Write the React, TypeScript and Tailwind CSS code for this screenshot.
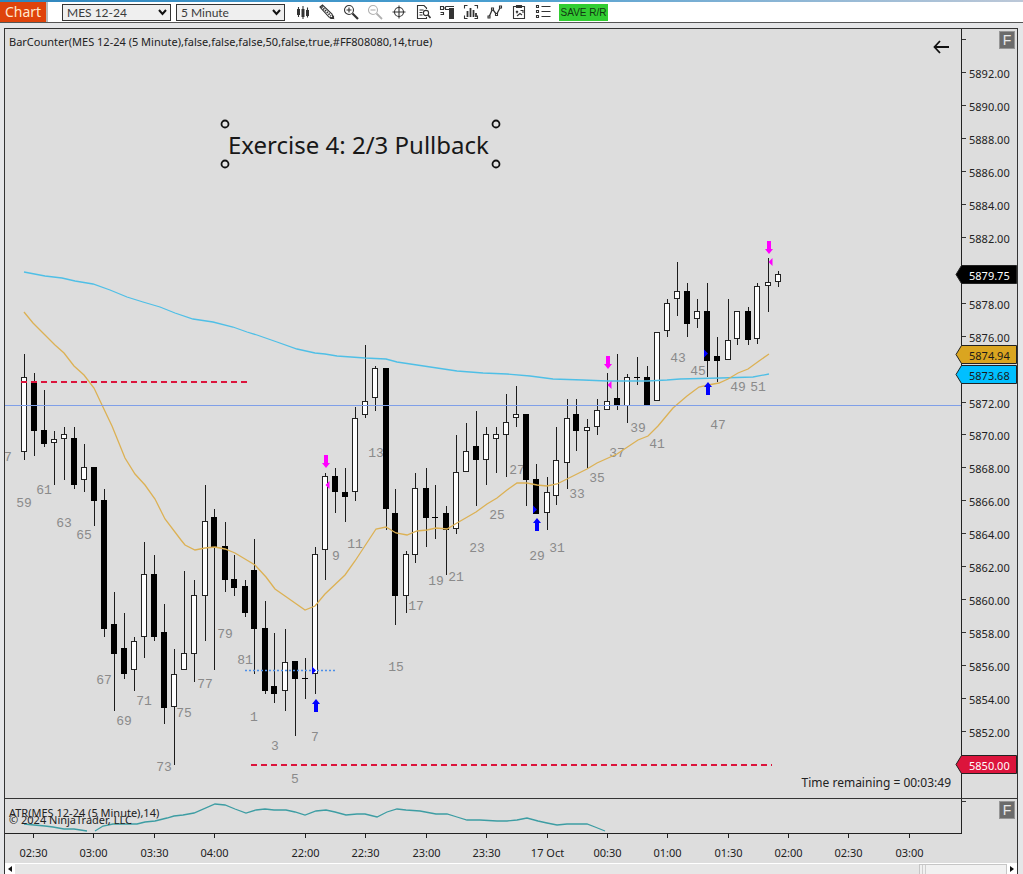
import React from "react";

type Candle = [x: number, high: number, top: number, bottom: number, low: number, up: 0 | 1];

const CANDLES: Candle[] = [
  [24, 354, 377, 452, 460, 1], [34, 373, 382, 431, 456, 0], [44, 390, 430, 444, 447, 0],
  [54, 431, 439, 443, 485, 1], [64, 427, 434, 439, 480, 1], [74, 427, 438, 485, 489, 0],
  [84, 444, 467, 480, 492, 1], [94, 467, 467, 501, 526, 0], [104, 489, 500, 629, 637, 0],
  [114, 592, 624, 654, 711, 0], [124, 613, 648, 674, 679, 0], [134, 637, 641, 670, 691, 1],
  [144, 542, 574, 637, 658, 1], [154, 555, 574, 637, 641, 0], [164, 604, 632, 708, 724, 0],
  [174, 649, 674, 707, 765, 1], [184, 571, 653, 670, 670, 1], [194, 580, 595, 654, 682, 1],
  [205, 485, 521, 596, 641, 1], [214, 509, 517, 547, 670, 0], [225, 522, 546, 580, 592, 0],
  [234, 555, 579, 588, 596, 0], [245, 580, 586, 613, 617, 0], [254, 539, 570, 629, 674, 0],
  [265, 601, 628, 691, 694, 0], [274, 633, 686, 694, 703, 0], [285, 629, 662, 691, 711, 1],
  [295, 661, 661, 679, 736, 0], [305, 658, 678, 679, 699, 0], [315, 547, 554, 674, 694, 1],
  [325, 473, 476, 550, 580, 1], [335, 468, 476, 492, 513, 0], [345, 468, 492, 497, 522, 0],
  [355, 407, 418, 492, 501, 1], [365, 345, 401, 415, 418, 1], [375, 366, 368, 398, 411, 1],
  [386, 368, 368, 509, 530, 0], [395, 489, 513, 596, 625, 0], [406, 551, 554, 596, 613, 1],
  [415, 473, 488, 555, 563, 1], [426, 468, 488, 518, 547, 0], [435, 485, 517, 518, 539, 0],
  [446, 506, 513, 530, 575, 0], [456, 435, 472, 529, 534, 1], [466, 423, 451, 472, 472, 1],
  [476, 411, 446, 460, 506, 0], [486, 427, 434, 460, 485, 1], [496, 427, 434, 439, 473, 1],
  [506, 394, 422, 435, 477, 1], [516, 386, 414, 418, 427, 1], [526, 414, 414, 480, 506, 0],
  [536, 464, 479, 514, 514, 0], [547, 477, 492, 513, 530, 1], [556, 427, 460, 496, 505, 1],
  [567, 399, 418, 463, 489, 1], [576, 399, 414, 431, 451, 0], [587, 419, 427, 430, 468, 1],
  [597, 399, 410, 427, 435, 1], [607, 373, 401, 410, 410, 1], [617, 354, 398, 406, 410, 0],
  [627, 374, 377, 406, 423, 1], [637, 357, 377, 378, 385, 0], [647, 366, 377, 406, 406, 0],
  [657, 332, 332, 401, 401, 1], [667, 299, 303, 331, 337, 1], [677, 262, 291, 299, 316, 1],
  [687, 283, 291, 324, 337, 0], [697, 299, 311, 319, 328, 1], [707, 283, 311, 361, 377, 0],
  [717, 337, 356, 361, 382, 0], [728, 299, 340, 360, 360, 1], [737, 311, 311, 339, 345, 1],
  [748, 307, 311, 340, 345, 0], [757, 283, 286, 339, 344, 1], [768, 258, 282, 286, 312, 1],
  [778, 271, 274, 282, 287, 1],
];

const BAR_NUMBERS: [label: string, x: number, y: number][] = [
  ["59", 24, 503], ["61", 44, 490], ["63", 64, 523], ["65", 84, 535], ["67", 104, 680],
  ["69", 124, 721], ["71", 144, 701], ["73", 164, 767], ["75", 184, 713], ["77", 205, 684],
  ["79", 225, 634], ["81", 245, 660], ["1", 254, 717], ["3", 275, 746], ["5", 295, 779],
  ["7", 315, 737], ["9", 336, 556], ["11", 355, 544], ["13", 376, 453], ["15", 396, 667],
  ["17", 416, 606], ["19", 436, 581], ["21", 456, 577], ["23", 477, 548], ["25", 497, 515],
  ["27", 517, 470], ["29", 537, 556], ["31", 557, 548], ["33", 577, 494], ["35", 597, 478],
  ["37", 617, 453], ["39", 638, 428], ["41", 657, 444], ["43", 678, 358], ["45", 698, 371],
  ["47", 718, 425], ["49", 738, 387], ["51", 758, 387],
];

const SLOW_AVERAGE =
  "24,272 45,276 62,278 75,281 93,284 110,290 127,297 143,302 160,307 175,313 193,319 213,322 233,327 247,332 257,335 277,342 297,349 315,353 325,354 337,356 365,358 386,359 397,362 417,365 437,368 457,371 483,373 507,374 530,376 553,379 583,380 607,381 647,381 667,380 680,379 720,378 753,377 769,374";
const FAST_AVERAGE =
  "24,312 33,323 45,335 55,345 64,353 74,366 84,375 94,388 102,405 112,426 125,458 135,474 145,485 155,499 165,519 181,540 185,545 195,550 205,548 215,547 225,549 235,553 255,565 266,577 275,589 285,596 305,610 315,606 325,594 345,575 355,561 376,529 386,527 396,533 407,535 417,531 427,530 436,528 447,529 457,523 476,512 487,504 497,498 507,490 517,483 527,483 537,485 547,486 557,484 567,479 587,469 597,463 617,454 638,440 648,436 658,426 673,408 687,396 699,387 708,385 719,383 728,379 738,373 748,369 759,361 769,354";
const ATR_LINES = [
  "24,824 34,825 45,826 53,827 64,829 74,829 87,831",
  "95,831 103,826 113,824 137,824 145,822 155,821 167,818 174,816 183,815 194,813 215,804 225,805 235,809 246,813 256,810 265,809 274,810 286,810 295,812 305,815 316,811 326,810 335,812 346,815 357,814 365,814 377,817 387,812 397,809 406,810 420,811 436,814 447,814 457,817 467,820 480,820 497,821 507,821 517,820 527,818 538,821 547,823 557,825 567,824 587,824 595,827 605,831",
];

const PRICE_STEP = 32.95;
const PRICES = Array.from({ length: 22 }, (_, i) => ({
  label: (5892 - i * 2).toFixed(2),
  y: Math.round(73 + i * PRICE_STEP),
})).filter((p) => !["5880.00", "5874.00", "5850.00"].includes(p.label));

const PRICE_TAGS = [
  { label: "5879.75", y: 275, fill: "#000000", ink: "#ffffff" },
  { label: "5874.94", y: 355, fill: "#daa520", ink: "#1a1a1a" },
  { label: "5873.68", y: 375, fill: "#00bfff", ink: "#1a1a1a" },
  { label: "5850.00", y: 765, fill: "#dc143c", ink: "#ffffff" },
];

const TIMES: [string, number][] = [
  ["02:30", 33], ["03:00", 93], ["03:30", 154], ["04:00", 214], ["22:00", 305],
  ["22:30", 365], ["23:00", 426], ["23:30", 486], ["17 Oct", 547], ["00:30", 607],
  ["01:00", 667], ["01:30", 728], ["02:00", 788], ["02:30", 848], ["03:00", 909],
];

const SELLS: [number, number][] = [[325, 455], [607, 356], [768, 241]];
const BUYS: [number, number][] = [[315, 699], [536, 518], [707, 382]];
const HANDLES: [number, number][] = [[225, 124], [496, 124], [225, 164], [496, 164]];

function PricePlot() {
  return (
    <svg className="block h-full w-full" role="img" aria-label="MES 12-24 five minute candles">
      <g transform="translate(-5 -29)">
        <g className="fill-[#8a8a8a] font-['Liberation_Mono',monospace] text-[13px]">
          <text x="8" y="461" textAnchor="middle">7</text>
          {BAR_NUMBERS.map(([label, x, y]) => (
            <text key={label} x={x} y={y + 4} textAnchor="middle">{label}</text>
          ))}
        </g>
        <g shapeRendering="crispEdges">
          {CANDLES.map(([x, high, top, bottom, low, up]) => (
            <g key={x}>
              <rect x={x} y={high} width="1" height={low - high} fill="#1c1c1c" />
              {up ? (
                <rect x={x - 2.5} y={top + 0.5} width="5" height={Math.max(bottom - top - 1, 3)} fill="#fff" stroke="#222" />
              ) : (
                <rect x={x - 3} y={top} width="6" height={bottom - top} fill="#000" />
              )}
            </g>
          ))}
        </g>
        <polyline points={SLOW_AVERAGE} fill="none" stroke="#4fbfe6" strokeWidth="1.3" />
        <polyline points={FAST_AVERAGE} fill="none" stroke="#dcb154" strokeWidth="1.3" />
        <rect x="5" y="405" width="100%" height="1" fill="#7f9fe8" />
        <path d="M21 382H249" stroke="#dc143c" strokeWidth="2" strokeDasharray="6 4" />
        <path d="M251 765H772" stroke="#dc143c" strokeWidth="2" strokeDasharray="6 4" />
        <path d="M245 670.5H336" stroke="#4d8fe8" strokeWidth="1.3" strokeDasharray="2 2" />
        {SELLS.map(([x, y]) => (
          <path key={x} d={`M${x - 1} ${y}h4v8h2l-4 5l-4 -5h2z`} fill="#ff00ff" />
        ))}
        <path d="M325.500 485l4-4v8z M607.500 385l4-4v8z M768.500 262l4-4v8z" fill="#ff00ff" />
        {BUYS.map(([x, y]) => (
          <path key={x} d={`M${x - 1} ${y + 13}h4v-8h2l-4 -5l-4 5h2z`} fill="#0000ff" />
        ))}
        <path d="M316 670.500l-4-4v8z M537 509.500l-4-4v8z M708 353.500l-4-4v8z" fill="#0000ff" />
        <text x="228" y="154" className="fill-[#181818] font-['Noto_Sans',sans-serif] text-[24px]">Exercise 4: 2/3 Pullback</text>
        {HANDLES.map(([x, y]) => (
          <circle key={`${x}-${y}`} cx={x} cy={y} r="3.5" fill="#e4e4e4" stroke="#111" strokeWidth="1.8" />
        ))}
      </g>
    </svg>
  );
}

function PriceAxis() {
  return (
    <svg className="block h-full w-full overflow-visible">
      <g transform="translate(-962 -29)" className="font-['Noto_Sans',sans-serif] text-[11px]">
        <path d="M962 39.500h4" stroke="#333" />
        {PRICES.map((p) => (
          <g key={p.label}>
            <path d={`M962 ${p.y - 0.5}h4`} stroke="#333" />
            <text x="969" y={p.y + 5} fill="#222">{p.label}</text>
          </g>
        ))}
        {PRICE_TAGS.map((t) => (
          <g key={t.label}>
            <path d={`M956 ${t.y - 0.5}L961.500 ${t.y - 9.5}H1016.500V${t.y + 8.5}H961.500z`} fill={t.fill} stroke="#222" />
            <text x="969" y={t.y + 5} fill={t.ink}>{t.label}</text>
          </g>
        ))}
      </g>
    </svg>
  );
}

function Instrument({ id, label, value }: { id: string; label: string; value: string }) {
  return (
    <div className="relative h-[17px] w-[109px] shrink-0">
      <label htmlFor={id} className="sr-only">{label}</label>
      <select id={id} className="block h-full w-full appearance-none border border-[#333] bg-[#efefef] py-0 pl-1 font-['Lato',sans-serif] text-[12px] leading-[15px] text-[#3a3a3a]">
        <option>{value}</option>
      </select>
      <svg className="pointer-events-none absolute top-[5px] right-1" width="9" height="7" viewBox="0 0 9 7" fill="none" stroke="#111" strokeWidth="2">
        <path d="M1 1l3.500 4L8 1" />
      </svg>
    </div>
  );
}

const TOOLS: { name: string; art: React.ReactNode }[] = [
  { name: "Chart style", art: <g><path d="M3.500 3v10M8 2v13M12.500 3.500v10" /><path d="M2 5h3v6H2zM6.500 5h3v8h-3zM11 6h3v6h-3z" fill="currentColor" stroke="none" /></g> },
  { name: "Draw", art: <g><path d="M1 3l2.500-2L13 10l1.500 4.500L10 13z" /><path d="M2.500 2.500L12 12" strokeWidth="1.800" strokeDasharray="1.500 1" /><path d="M12 14.500l2.500 0v-2z" fill="currentColor" /></g> },
  { name: "Zoom in", art: <g><circle cx="6" cy="6" r="4.500" /><path d="M3.500 6h5M6 3.500v5" /><path d="M9.500 9.500L15 15" strokeWidth="2.200" /></g> },
  { name: "Zoom out", art: <g stroke="#b0b0b0"><circle cx="6" cy="6" r="4.500" /><path d="M3.500 6h5" /><path d="M9.500 9.500L15 15" strokeWidth="1.800" /></g> },
  { name: "Crosshair", art: <g><circle cx="8" cy="8" r="4.500" /><path d="M8 1.500v13M1.500 8h13" /></g> },
  { name: "Data box", art: <g><path d="M11.500 5V4L9 1.500H2.500v13h9V13M4.500 6h4M4.500 8.500h3M4.500 11h3" /><circle cx="11" cy="9" r="2.600" /><path d="M13 11l2.500 3" strokeWidth="1.600" /></g> },
  { name: "Chart trader", art: <g><path d="M10 4h5v11h-5z" fill="currentColor" stroke="none" /><path d="M1.500 2.500h3v3h-3zM6.500 2.500H15M4.500 4h2M1.500 8.500h3v2h-3M6.500 2.500v3H10" /></g> },
  { name: "Data series", art: <g><path d="M1.500 4.500v-3h3M11.500 1.500h3v3M14.500 11.500v3h-3M4.500 14.500h-3v-3" /><path d="M4.500 7v6M7.500 4v9M10.500 6v7M13 9v4" strokeWidth="1.800" /></g> },
  { name: "Indicators", art: <g><path d="M2 13L5.500 5l4 5.500L13.500 3" strokeWidth="1.300" /><path d="M1 12h2v2H1zM4.500 4h2v2h-2zM8.500 9.500h2v2h-2zM12.500 2h2v2h-2z" fill="#fff" /></g> },
  { name: "Strategies", art: <g><path d="M2.500 2.500h11v12h-11zM5.500 1.500h5v2h-5z" /><path d="M5 7l2 2M7 7L5 9M6 12l3-2.500 2 1.500M9.500 6.500H12V9" /></g> },
  { name: "Properties", art: <g><path d="M1.500 1.500h2v2h-2zM1.500 6.500h2v2h-2zM1.500 11.500h2v2h-2zM6.500 2.500h9M6.500 7.500h9M6.500 12.500h9" /></g> },
];

function FixedScale() {
  return (
    <button aria-label="Fixed scale" className="absolute top-0.5 right-0.5 h-[18px] w-4 border border-[#969696] bg-[#6b6b6b] text-center font-['Liberation_Sans',sans-serif] text-[14px] leading-4 text-[#e8e8e8]">
      F
    </button>
  );
}

export default function App() {
  return (
    <div className="flex h-screen min-h-[874px] flex-col overflow-hidden bg-[#e5e6e8] font-['Noto_Sans',sans-serif] text-[11px] text-[#222]">
      <div className="h-0.5 shrink-0 bg-linear-to-r from-[#2f86bd] via-[#4b9fd0] to-[#bcc8d8]" />
      <header className="flex h-[21px] shrink-0 items-center border-b border-[#555] bg-white">
        <button className="h-full w-12 border-r-2 border-[#b9b9b9] bg-[#df430b] text-center text-[14px] leading-5 text-[#ffe9cf]">Chart</button>
        <div className="ml-3.5 flex gap-[5px]">
          <Instrument id="instrument" label="Instrument" value="MES 12-24" />
          <Instrument id="interval" label="Interval" value="5 Minute" />
        </div>
        <nav className="ml-2.5 flex items-center gap-2">
          {TOOLS.map((t) => (
            <button key={t.name} aria-label={t.name} className="text-[#333]">
              <svg className="block" width="16" height="16" viewBox="0 0 16 16" fill="none" stroke="currentColor" strokeWidth="1.100">
                {t.art}
              </svg>
            </button>
          ))}
          <button className="h-[17px] w-[49px] bg-[#32cd32] text-center font-['Liberation_Sans',sans-serif] text-[10px] leading-[17px] whitespace-nowrap text-[#123812]">SAVE R/R</button>
        </nav>
      </header>

      <main className="mt-[5px] mr-[5px] ml-1 flex min-h-0 flex-1 flex-col border-x border-t border-[#333] bg-[#dddddd]">
        <section className="flex min-h-0 flex-1 border-b border-[#333]">
          <div className="relative min-w-0 flex-1">
            <PricePlot />
            <p className="absolute top-[5px] left-1 leading-4 whitespace-nowrap">BarCounter(MES 12-24 (5 Minute),false,false,false,50,false,true,#FF808080,14,true)</p>
            <button aria-label="Back" className="absolute top-[11px] right-3">
              <svg className="block" width="16" height="14" viewBox="0 0 16 14" fill="none" stroke="#111" strokeWidth="1.800">
                <path d="M16 7H1.500M7 1L1.500 7L7 13" />
              </svg>
            </button>
            <p className="absolute right-2.5 bottom-[7px] text-[12px] leading-4">Time remaining = 00:03:49</p>
          </div>
          <div className="relative w-14 shrink-0 border-l border-[#222]">
            <PriceAxis />
            <FixedScale />
          </div>
        </section>

        <section className="flex h-[35px] shrink-0">
          <div className="relative min-w-0 flex-1 border-b border-[#222]">
            <svg className="block h-full w-full">
              <g transform="translate(-5 -799)" fill="none" stroke="#3d9da3" strokeWidth="1.300">
                {ATR_LINES.map((points) => <polyline key={points} points={points} />)}
              </g>
            </svg>
            <div className="absolute top-1.5 left-1 whitespace-nowrap">
              <p className="h-[7px] leading-4">ATR(MES 12-24 (5 Minute),14)</p>
              <p className="leading-4">© 2024 NinjaTrader, LLC</p>
            </div>
          </div>
          <div className="relative w-14 shrink-0">
            <div className="h-full w-px bg-[#222]" />
            <div className="absolute top-0.5 left-0 h-px w-[5px] bg-[#333]" />
            <FixedScale />
          </div>
        </section>

        <svg className="block h-[29px] w-full shrink-0" role="img" aria-label="Time axis">
          <g transform="translate(-5 -834)">
            {TIMES.map(([label, x]) => (
              <g key={x}>
                <path d={`M${x + 0.5} 834v4`} stroke="#222" />
                <text x={x + 0.5} y="857" textAnchor="middle" fill="#222">{label}</text>
              </g>
            ))}
          </g>
        </svg>

        <div className="flex h-[11px] shrink-0 border-t border-white bg-[#e6e6e6]">
          <button aria-label="Scroll left" className="w-2.5 bg-white pl-[3px]">
            <svg className="block" width="4" height="6" viewBox="0 0 4 6"><path d="M4 0v6L0 3z" fill="#111" /></svg>
          </button>
          <div className="flex flex-1 justify-end">
            <div className="flex w-[88px] gap-0.5 border border-b-0 border-[#c6c6c6] bg-[#f1f1f1] pl-0.5">
              <span className="w-px bg-[#cfcfcf]" />
              <span className="w-px bg-[#cfcfcf]" />
            </div>
          </div>
          <button aria-label="Scroll right" className="w-2.5 bg-white pl-[3px]">
            <svg className="block" width="4" height="6" viewBox="0 0 4 6"><path d="M0 0v6l4-3z" fill="#111" /></svg>
          </button>
        </div>
      </main>
    </div>
  );
}
